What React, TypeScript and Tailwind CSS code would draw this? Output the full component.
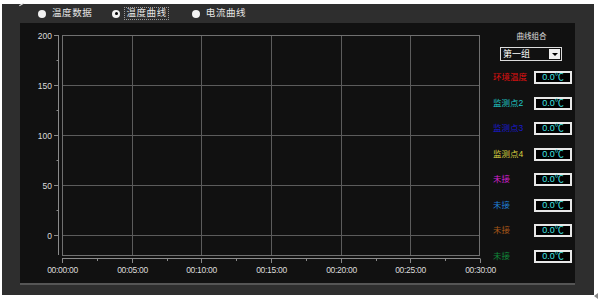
import React from "react";

const rows = [
  { label: "环境温度", color: "#e01010" },
  { label: "监测点2", color: "#20c8c8" },
  { label: "监测点3", color: "#1a1ad0" },
  { label: "监测点4", color: "#d8d040" },
  { label: "未接", color: "#d020d0" },
  { label: "未接", color: "#2080d8" },
  { label: "未接", color: "#a85818" },
  { label: "未接", color: "#10883a" },
];

const xLabels = ["00:00:00", "00:05:00", "00:10:00", "00:15:00", "00:20:00", "00:25:00", "00:30:00"];
const yLabels = ["200", "150", "100", "50", "0"];

function Chart() {
  const left = 42;
  const right = 460;
  const top = 12;
  const bottom = 232;
  const step = (right - left) / 6;
  const xs = Array.from({ length: 7 }, (_, i) => Math.round(left + i * step) + 0.5);
  const ys = [0, 1, 2, 3, 4].map((k) => top + k * 50 + 0.5);
  return (
    <svg width={465} height={260} className="block shrink-0 overflow-visible">
      <g stroke="#5c5c5c" strokeWidth={1}>
        {xs.slice(1, 6).map((x) => (
          <line key={x} x1={x} y1={top} x2={x} y2={bottom} />
        ))}
        {ys.slice(1).map((y) => (
          <line key={y} x1={left} y1={y} x2={right} y2={y} />
        ))}
      </g>
      <rect x={left + 0.5} y={top + 0.5} width={right - left - 1} height={bottom - top} fill="none" stroke="#707070" />
      <g stroke="#8a8a8a" strokeWidth={1}>
        <line x1={38.5} y1={top} x2={38.5} y2={bottom} />
        {ys.map((y) => (
          <line key={"t" + y} x1={34} y1={y} x2={38.5} y2={y} />
        ))}
        {ys.slice(0, 4).map((y) => (
          <line key={"m" + y} x1={36.5} y1={y + 25} x2={38.5} y2={y + 25} />
        ))}
        <line x1={left} y1={235.5} x2={right} y2={235.5} />
        {xs.map((x) => (
          <line key={"xt" + x} x1={x} y1={235.5} x2={x} y2={240} />
        ))}
        {xs.slice(0, 6).map((x) => (
          <line key={"xm" + x} x1={Math.round(x + step / 2) + 0.5} y1={235.5} x2={Math.round(x + step / 2) + 0.5} y2={238} />
        ))}
      </g>
      <g fill="#dcdcdc" fontFamily="'Liberation Sans', Arial, sans-serif" fontSize={8.5}>
        {yLabels.map((t, i) => (
          <text key={t} x={32} y={ys[i] + 3} textAnchor="end">
            {t}
          </text>
        ))}
        {xLabels.map((t, i) => (
          <text key={t} x={xs[i]} y={250} textAnchor="middle" letterSpacing={-0.3}>
            {t}
          </text>
        ))}
      </g>
    </svg>
  );
}

function Radio({ checked, label, focus }: { checked?: boolean; label: string; focus?: boolean }) {
  return (
    <div className="flex items-center">
      <div className="w-[8px] h-[8px] rounded-full bg-[#f2f2f2] flex items-center justify-center">
        {checked && <div className="w-[3px] h-[3px] rounded-full bg-black" />}
      </div>
      <div
        className={
          "ml-[4px] px-[1px] h-[13px] flex items-center text-[9.5px] tracking-[0.6px] text-[#e6e6e6] " +
          (focus ? "border border-dotted border-[#9a9a9a]" : "border border-transparent")
        }
      >
        {label}
      </div>
    </div>
  );
}

export default function App() {
  return (
    <div
      className="w-[598px] h-[299px] bg-white relative overflow-hidden"
      style={{ fontFamily: "'Liberation Sans', 'Noto Sans CJK SC', sans-serif" }}
    >
      <div className="ml-[2px] pt-0 mt-[4px] w-[592px] h-[291px] bg-[#2e2e2e] flex flex-col">
        <div className="h-[19px] flex items-center pl-[36px]">
          <Radio label="温度数据" />
          <div className="ml-[18px]">
            <Radio label="温度曲线" checked focus />
          </div>
          <div className="ml-[23px]">
            <Radio label="电流曲线" />
          </div>
        </div>
        <div className="ml-[18px] w-[555px] h-[262px] bg-[#111111] border-b-2 border-[#555555] flex">
          <Chart />
          <div className="w-[90px] flex flex-col">
            <div className="mt-[9px] h-[9px] text-[7.5px] leading-[9px] text-[#e0e0e0] text-center pl-[3px]">曲线组合</div>
            <div className="mt-[6px] ml-[15px] w-[62px] h-[14px] border border-[#dcdcdc] flex items-center">
              <div className="flex-1 pl-[2px] text-[9px] text-white leading-[12px]">第一组</div>
              <div className="w-[11px] h-[10px] mr-[1px] bg-[#f0f0f0] flex items-center justify-center">
                <div className="w-0 h-0 border-l-[3px] border-r-[3px] border-t-[3px] border-l-transparent border-r-transparent border-t-black" />
              </div>
            </div>
            <div className="mt-[4px] flex flex-col">
              {rows.map((r, i) => (
                <div key={i} className="h-[25.5px] flex items-center">
                  <div className="w-[49px] shrink-0 pl-[8px] text-[8.5px] whitespace-nowrap" style={{ color: r.color }}>
                    {r.label}
                  </div>
                  <div className="w-[38px] shrink-0 h-[13px] border-2 border-[#e8e8e8] bg-black flex items-center justify-center text-[9px] text-[#40e4e4] leading-none">
                    0.0℃
                  </div>
                </div>
              ))}
            </div>
          </div>
        </div>
      </div>
      <div className="absolute left-[19px] top-[4px] w-[5px] h-[1px] bg-[#e0e0e0] rotate-[-30deg]" />
      <div className="absolute left-[594px] top-[293px] w-0 h-0 border-t-[3px] border-b-[3px] border-r-[4px] border-t-transparent border-b-transparent border-r-[#888888]" />
    </div>
  );
}
